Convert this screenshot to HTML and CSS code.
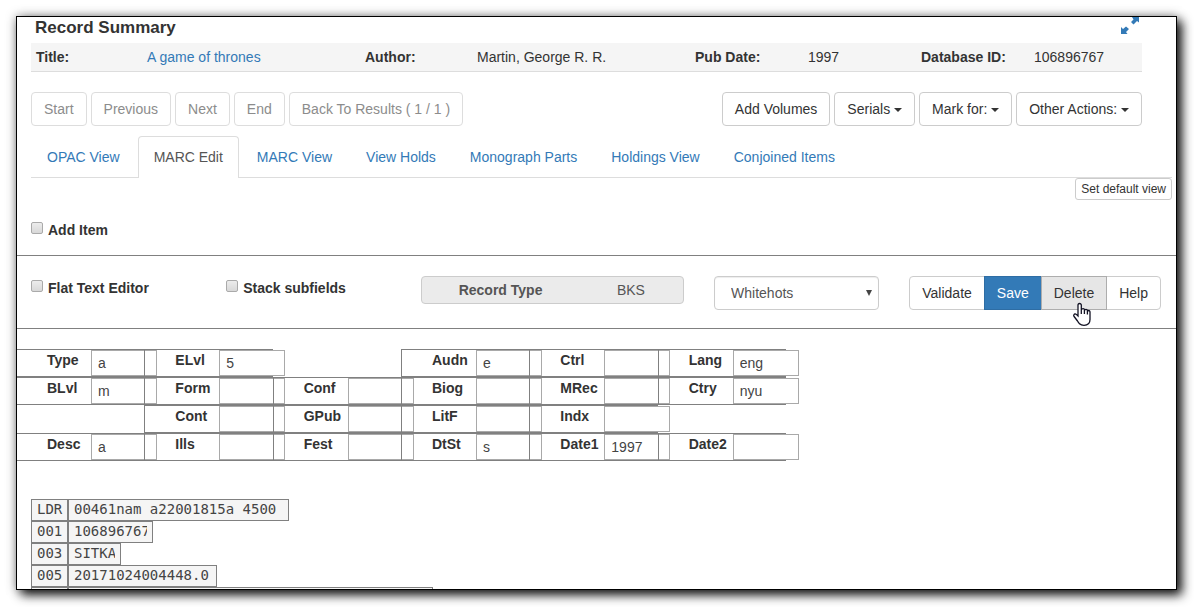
FILE: index.html
```
<!DOCTYPE html>
<html lang="en">
<head>
<meta charset="utf-8">
<title>Record Summary</title>
<link rel="stylesheet" href="styles.css">
</head>
<body>
<main class="panel">
  <header class="summary">
    <div class="summary-head">
      <h1 class="title">Record Summary</h1>
      <a class="expand" href="#" aria-label="Expand">
        <svg width="18" height="18" viewBox="0 0 18 18" fill="currentColor" aria-hidden="true"><path d="M11 0h7v5.500l-2-1.500-3.500 3.500-2.500-2.500 2.500-2.500zM0 17V10l2 2 3-2.500L8 12l-3 3 1.500 2z"/></svg>
      </a>
    </div>
    <div class="summary-bar">
      <b>Title:</b><a href="#">A game of thrones</a>
      <b>Author:</b><span>Martin, George R. R.</span>
      <b>Pub Date:</b><span>1997</span>
      <b>Database ID:</b><span>106896767</span>
    </div>
  </header>

  <div class="toolbar">
    <div class="buttons">
      <button class="btn" disabled>Start</button>
      <button class="btn" disabled>Previous</button>
      <button class="btn" disabled>Next</button>
      <button class="btn" disabled>End</button>
      <button class="btn" disabled>Back To Results ( 1 / 1 )</button>
    </div>
    <div class="buttons">
      <button class="btn">Add Volumes</button>
      <button class="btn">Serials <span class="caret"></span></button>
      <button class="btn">Mark for: <span class="caret"></span></button>
      <button class="btn">Other Actions: <span class="caret"></span></button>
    </div>
  </div>

  <nav class="tabs">
    <a class="tab" href="#">OPAC View</a>
    <a class="tab active" href="#">MARC Edit</a>
    <a class="tab" href="#">MARC View</a>
    <a class="tab" href="#">View Holds</a>
    <a class="tab" href="#">Monograph Parts</a>
    <a class="tab" href="#">Holdings View</a>
    <a class="tab" href="#">Conjoined Items</a>
  </nav>
  <div class="default-view"><button class="btn btn-xs">Set default view</button></div>

  <div class="add-item"><label class="check"><input type="checkbox">Add Item</label></div>

  <section class="options">
    <label class="check"><input type="checkbox">Flat Text Editor</label>
    <label class="check"><input type="checkbox">Stack subfields</label>
    <div class="record-type wide"><b>Record Type</b><span>BKS</span></div>
    <div class="select-wrap"><select class="select" aria-label="Source"><option>Whitehots</option></select></div>
    <div class="group wide">
      <button class="btn">Validate</button>
      <button class="btn primary">Save</button>
      <button class="btn hover">Delete
        <svg class="pointer" width="18" height="24" viewBox="0 0 18 24" aria-hidden="true"><path d="M6.500 1.500c-1 0-1.500.7-1.500 1.500v11l-1.700-1.600c-.8-.7-1.800-.5-2.300.2-.5.6-.3 1.300.1 1.900l3.400 4.500c.7 1 1 1.700 2 2.700 1 1 2.500 1.600 4.500 1.600 3.500 0 6-2 6-5.800V10c0-.9-.6-1.500-1.300-1.500-.7 0-1.200.5-1.300 1V8.600c0-.8-.6-1.300-1.400-1.300S11.500 7.800 11.500 8.400V8c0-.8-.6-1.300-1.400-1.300S8.500 7.200 8.300 7.800V3c0-.9-.7-1.500-1.800-1.500zM8.300 7.500V12M11.400 8V12M14.400 9V12.500" fill="#fff" stroke="#112" stroke-width="1.300"/></svg>
      </button>
      <button class="btn">Help</button>
    </div>
  </section>

  <section class="fixed">
    <label class="cell">Type<input value="a"></label>
    <label class="cell">ELvl<input value="5"></label>
    <span></span>
    <label class="cell">Audn<input value="e"></label>
    <label class="cell">Ctrl<input></label>
    <label class="cell">Lang<input value="eng"></label>

    <label class="cell">BLvl<input value="m"></label>
    <label class="cell">Form<input></label>
    <label class="cell">Conf<input></label>
    <label class="cell">Biog<input></label>
    <label class="cell">MRec<input></label>
    <label class="cell">Ctry<input value="nyu"></label>

    <span></span>
    <label class="cell">Cont<input></label>
    <label class="cell">GPub<input></label>
    <label class="cell">LitF<input></label>
    <label class="cell">Indx<input></label>
    <span></span>

    <label class="cell">Desc<input value="a"></label>
    <label class="cell">Ills<input></label>
    <label class="cell">Fest<input></label>
    <label class="cell">DtSt<input value="s"></label>
    <label class="cell">Date1<input value="1997"></label>
    <label class="cell">Date2<input></label>
  </section>

  <section class="marc">
    <label class="field"><span class="tag">LDR</span><input class="data" style="width:221px" value="00461nam a22001815a 4500"></label>
    <label class="field"><span class="tag">001</span><input class="data" style="width:85px" value="106896767"></label>
    <label class="field"><span class="tag">003</span><input class="data" style="width:53px" value="SITKA"></label>
    <label class="field"><span class="tag">005</span><input class="data" style="width:149px" value="20171024004448.0"></label>
    <label class="field"><span class="tag"></span><input class="data" style="width:365px" aria-label="Next field"></label>
  </section>
</main>
</body>
</html>
```
FILE: styles.css
```
* { box-sizing: border-box; }
body {
  margin: 0;
  height: 100vh;
  padding: 16px 17px 17px 16px;
  display: flex;
  background: #fff;
  color: #333;
  font: 14px/20px "Liberation Sans", Arial, sans-serif;
}
button, input, select { font: inherit; color: inherit; margin: 0; }
a { color: #337ab7; text-decoration: none; }

.panel {
  flex: 1;
  min-width: 0;
  overflow: hidden;
  border: 1px solid #000;
  background: #fff;
  box-shadow: 5px 5px 10px rgba(0, 0, 0, .9), 0 0 10px rgba(0, 0, 0, .35);
}

.summary { padding: 0 34px 0 14px; }
.summary-head { display: flex; justify-content: space-between; padding: 0 3px 0 4px; height: 26px; }
.title { margin: 0; font-size: 17px; line-height: 22px; }
.expand svg { display: block; }
.summary-bar {
  display: grid;
  grid-template-columns: 111fr 218fr 112fr 218fr 113fr 113fr 113fr 108fr;
  padding: 4px 0 4px 5px;
  background: #f5f5f5;
  border-bottom: 1px solid #ddd;
}

.toolbar { display: flex; justify-content: space-between; padding: 20px 34px 10px 14px; }
.buttons { display: flex; gap: 4px; }
.btn {
  padding: 6px 12px;
  border: 1px solid #ccc;
  border-radius: 4px;
  background: #fff;
  color: #333;
  white-space: nowrap;
}
.btn:disabled { color: #8c8c8c; border-color: #ddd; }
.btn-xs { padding: 1px 5px; border-radius: 3px; font-size: 12px; line-height: 18px; }
.caret {
  display: inline-block;
  vertical-align: middle;
  border-top: 4px solid;
  border-left: 4px solid transparent;
  border-right: 4px solid transparent;
}

.tabs { display: flex; gap: 2px; margin: 0 4px 0 14px; border-bottom: 1px solid #ddd; }
.tab { padding: 10px 15px; border: 1px solid transparent; border-bottom: 0; border-radius: 4px 4px 0 0; }
.tab.active { margin-bottom: -1px; padding-bottom: 11px; border-color: #ddd; background: #fff; color: #555; }
.default-view { display: flex; justify-content: flex-end; padding-right: 4px; }

.add-item { padding: 20px 14px 15px; border-bottom: 1px solid #808080; }
.check { display: flex; align-items: flex-start; gap: 5px; font-weight: bold; white-space: nowrap; }
.check input {
  appearance: none;
  width: 12px;
  height: 12px;
  margin-top: 2px;
  border: 1px solid #aaa;
  border-radius: 2px;
  background: linear-gradient(#ececec, #d8d8d8);
}

.options {
  display: grid;
  grid-template-columns: repeat(12, minmax(0, 1fr));
  column-gap: 30px;
  align-items: start;
  padding: 20px 4px 18px 14px;
  border-bottom: 1px solid #808080;
}
.options > * { grid-column: span 2; }
.options > .wide { grid-column: span 3; }
.options > .check { padding-top: 2px; }
.record-type {
  display: grid;
  grid-template-columns: 3fr 2fr;
  padding: 3px 0;
  border: 1px solid #ccc;
  border-radius: 4px;
  background: #ebebeb;
  color: #555;
  text-align: center;
}
.select-wrap { display: grid; align-items: center; }
.select-wrap::after {
  content: "";
  grid-area: 1 / 1;
  justify-self: end;
  margin-right: 7px;
  border-top: 6px solid #444;
  border-left: 3px solid transparent;
  border-right: 3px solid transparent;
  pointer-events: none;
}
.select {
  grid-area: 1 / 1;
  appearance: none;
  height: 34px;
  padding: 6px 16px;
  border: 1px solid #ccc;
  border-radius: 4px;
  background: #fff;
  box-shadow: inset 0 1px 1px rgba(0, 0, 0, .075);
  color: #555;
}
.group { display: flex; }
.group .btn { border-radius: 0; margin-left: -1px; position: relative; }
.group .btn:first-child { border-radius: 4px 0 0 4px; margin-left: 0; }
.group .btn:last-child { border-radius: 0 4px 4px 0; }
.group .primary { background: #337ab7; border-color: #2e6da4; color: #fff; }
.group .hover { background: #e6e6e6; border-color: #adadad; z-index: 1; }
.pointer { position: absolute; left: 31px; top: 25px; }

.fixed {
  display: grid;
  grid-template-columns: repeat(6, minmax(0, 1fr));
  grid-auto-rows: 28px;
  max-width: 770px;
  margin: 20px 0 38px -1px;
}
.cell {
  display: grid;
  grid-template-columns: 44px 66px;
  padding-left: 30px;
  border: 1px solid #808080;
  border-right: 0;
  font-weight: bold;
}
.cell input {
  width: 66px;
  height: 26px;
  padding: 2px 6px;
  border: 1px solid #a9a9a9;
  background: #fff;
  color: #444;
  font-weight: normal;
}

.marc { padding-left: 14px; color: #444; font: 14px/18px "DejaVu Sans Mono", monospace; }
.field { display: flex; height: 22px; }
.tag, .data { border: 1px solid #808080; background: #f5f5f5; padding: 0 5px 2px; border-radius: 0; }
.tag { width: 37px; }
```
